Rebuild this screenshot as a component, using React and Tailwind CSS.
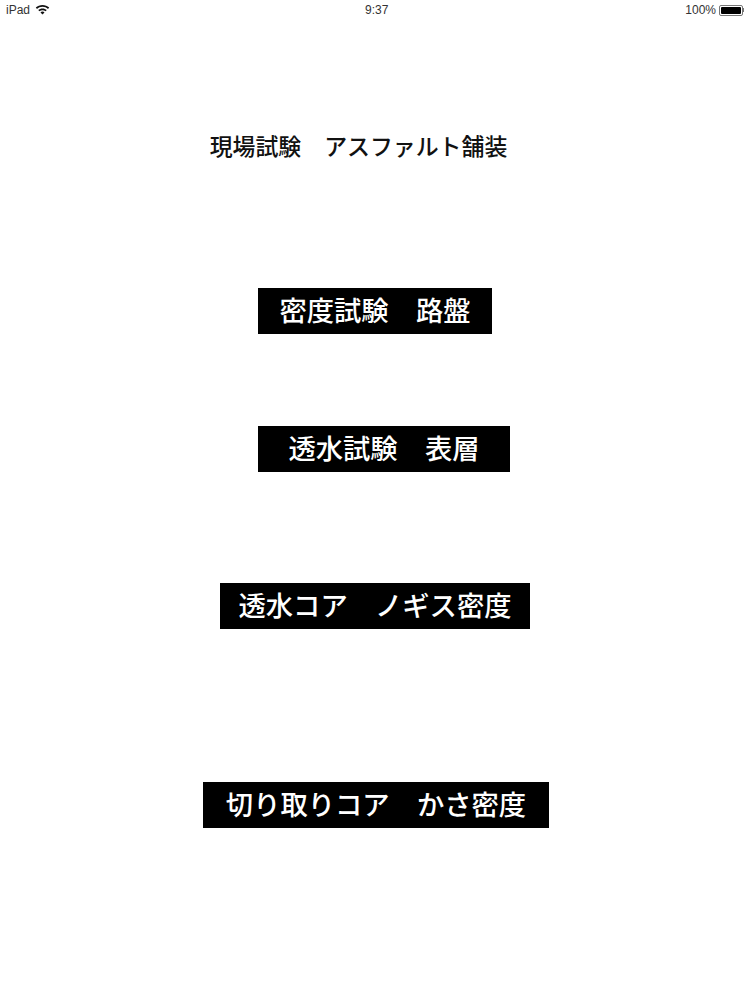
const font = { fontFamily: '"Noto Sans CJK JP", sans-serif' };

function Wifi() {
  return (
    <svg width="15" height="11" viewBox="0 0 15 11" className="mb-[2px] ml-[5px]">
      <path d="M7.5 1C4.9 1 2.6 2 .8 3.6l1.2 1.3C3.5 3.6 5.4 2.8 7.5 2.8s4 .8 5.5 2.1l1.2-1.3C12.4 2 10.1 1 7.5 1z" fill="#111" />
      <path d="M7.5 4.4c-1.7 0-3.2.6-4.3 1.6l1.3 1.3c.8-.7 1.9-1.1 3-1.1s2.2.4 3 1.1L11.8 6c-1.1-1-2.6-1.6-4.3-1.6z" fill="#111" />
      <path d="M7.5 7.6c-.8 0-1.5.3-2 .8l2 2.1 2-2.1c-.5-.5-1.2-.8-2-.8z" fill="#111" />
    </svg>
  );
}

function Battery() {
  return (
    <div className="ml-[3px] flex items-center">
      <div className="h-[11px] w-[24px] rounded-[2px] border border-[#777] p-[1px]">
        <div className="h-full w-full rounded-[1px] bg-black" />
      </div>
      <div className="h-[4px] w-[1px] bg-[#777]" />
    </div>
  );
}

function TestButton({ label, className }) {
  return (
    <button className={`flex h-[46px] items-center justify-center bg-black pb-[3px] text-[27.3px] font-medium leading-none whitespace-pre text-white ${className}`}>
      {label}
    </button>
  );
}

export default function App() {
  return (
    <div className="h-[1000px] w-[750px] bg-white text-black" style={font}>
      <div className="relative flex h-[20px] items-center justify-between px-[6px] text-[12px] text-[#333]">
        <div className="flex items-center">
          <span style={{ fontFamily: '"Liberation Sans", sans-serif' }}>iPad</span>
          <Wifi />
        </div>
        <span className="absolute left-[365px] top-[2px] leading-4" style={{ fontFamily: '"Liberation Sans", sans-serif' }}>9:37</span>
        <div className="flex items-center">
          <span style={{ fontFamily: '"Liberation Sans", sans-serif' }}>100%</span>
          <Battery />
        </div>
      </div>

      <div className="flex flex-col items-center">
        <h1 className="mt-[109px] ml-[-33px] text-[22.9px] leading-[32px] font-medium whitespace-pre text-[#111]">現場試験　アスファルト舗装</h1>
        <TestButton label="密度試験　路盤" className="mt-[127px] w-[234px]" />
        <TestButton label="透水試験　表層" className="mt-[92px] ml-[18px] w-[252px]" />
        <TestButton label="透水コア　ノギス密度" className="mt-[111px] w-[310px]" />
        <TestButton label="切り取りコア　かさ密度" className="mt-[153px] ml-[2px] w-[346px]" />
      </div>
    </div>
  );
}
